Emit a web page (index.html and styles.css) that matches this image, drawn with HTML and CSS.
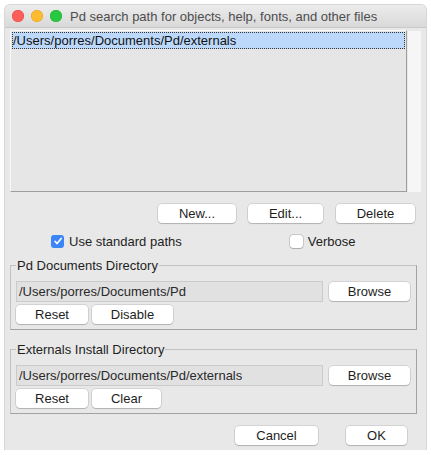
FILE: index.html
```html
<!DOCTYPE html>
<html>
<head>
<meta charset="utf-8">
<link rel="stylesheet" href="styles.css">
</head>
<body>
<div class="window">
  <div class="titlebar">
    <span class="light red"></span>
    <span class="light yellow"></span>
    <span class="light green"></span>
    <span class="title">Pd search path for objects, help, fonts, and other files</span>
  </div>
  <div class="content">
    <div class="listarea">
      <div class="list">
        <div class="item selected">/Users/porres/Documents/Pd/externals</div>
      </div>
      <div class="track"></div>
    </div>
    <div class="row actions">
      <button class="btn w-new">New...</button>
      <button class="btn w-edit">Edit...</button>
      <button class="btn w-delete">Delete</button>
    </div>
    <div class="row checks">
      <label class="check std"><span class="box on"><svg viewBox="0 0 12 12" width="12" height="12"><path d="M3 6.3 L5.1 8.6 L9.2 3.4" fill="none" stroke="#fff" stroke-width="1.6" stroke-linecap="round" stroke-linejoin="round"/></svg></span>Use standard paths</label>
      <label class="check verbose"><span class="box"></span>Verbose</label>
    </div>
    <fieldset class="group">
      <legend>Pd Documents Directory</legend>
      <div class="grow">
        <div class="entry">/Users/porres/Documents/Pd</div>
        <button class="btn w-browse">Browse</button>
      </div>
      <div class="grow">
        <button class="btn w-reset">Reset</button>
        <button class="btn w-disable">Disable</button>
      </div>
    </fieldset>
    <fieldset class="group second">
      <legend>Externals Install Directory</legend>
      <div class="grow">
        <div class="entry">/Users/porres/Documents/Pd/externals</div>
        <button class="btn w-browse">Browse</button>
      </div>
      <div class="grow">
        <button class="btn w-reset">Reset</button>
        <button class="btn w-clear">Clear</button>
      </div>
    </fieldset>
    <div class="row footer">
      <button class="btn w-cancel">Cancel</button>
      <button class="btn w-ok">OK</button>
    </div>
  </div>
</div>
</body>
</html>
```

FILE: styles.css
```css
html, body {
  margin: 0;
  padding: 0;
  background: #ffffff;
}
body {
  padding: 5px 0 0 5px;
  font-family: "Liberation Sans", Arial, sans-serif;
  font-size: 13px;
  color: #1e1e1e;
}
.window {
  width: 421px;
  height: 445px;
  background: #e8e8e8;
  border-radius: 5px 5px 0 0;
  box-shadow: 0 0 0 1px #d6d6d6;
  overflow: hidden;
}
.titlebar {
  height: 23px;
  display: flex;
  align-items: center;
  padding-left: 7px;
  background: linear-gradient(#ececec, #d9d9d9);
  border-bottom: 1px solid #c9c9c9;
  box-sizing: border-box;
}
.light {
  width: 12px;
  height: 12px;
  border-radius: 50%;
  margin-right: 7px;
  flex: none;
}
.red { background: #fc5f57; box-shadow: inset 0 0 0 0.5px #df4744; }
.yellow { background: #fdbc2e; box-shadow: inset 0 0 0 0.5px #de9f34; }
.green { background: #28c840; box-shadow: inset 0 0 0 0.5px #27aa35; }
.title {
  margin-left: 1px;
  color: #4d4d4d;
  font-size: 13px;
  white-space: nowrap;
}
.content {
  padding: 2px 11px 0 5px;
}
.listarea {
  display: flex;
  height: 162px;
}
.list {
  flex: none;
  width: 397px;
  box-sizing: border-box;
  background: #e6e6e6;
  border-left: 1px solid #f7f7f7;
  border-top: 1px solid #f7f7f7;
  border-right: 1px solid #9d9d9d;
  border-bottom: 1px solid #9d9d9d;
  padding: 0 1px;
}
.item {
  height: 17px;
  line-height: 16px;
  font-size: 13px;
  padding-left: 0;
  color: #111;
  box-sizing: border-box;
}
.selected {
  background: #bcd9fb;
  border: 1px dotted #333;
  margin-top: 1px;
}
.track {
  flex: none;
  width: 13px;
  margin-left: 1px;
  margin-top: 1px;
  background: #f6f6f6;
}
.row {
  display: flex;
  align-items: center;
}
.btn {
  font-family: "Liberation Sans", Arial, sans-serif;
  font-size: 13px;
  color: #1e1e1e;
  background: #ffffff;
  border: none;
  border-radius: 4px;
  height: 19px;
  padding: 0;
  box-shadow: 0 0 0 0.5px rgba(0,0,0,0.18), 0 1px 1px rgba(0,0,0,0.16);
  line-height: 19px;
  text-align: center;
}
.actions {
  justify-content: flex-end;
  margin-top: 12px;
  gap: 12px;
}
.w-new { width: 78px; }
.w-edit { width: 75px; }
.w-delete { width: 79px; margin-left: 1px; }
.checks {
  margin-top: 11px;
  height: 14px;
}
.check {
  display: flex;
  align-items: center;
  white-space: nowrap;
}
.std { margin-left: 41px; }
.verbose { margin-left: 108px; }
.box {
  width: 13px;
  height: 13px;
  box-sizing: border-box;
  border-radius: 3px;
  background: #fff;
  box-shadow: 0 0 0 0.5px rgba(0,0,0,0.25), 0 0.5px 1px rgba(0,0,0,0.15);
  margin-right: 5px;
  display: flex;
  align-items: center;
  justify-content: center;
}
.box.on {
  background: #3b85f7;
  box-shadow: none;
}
.group {
  margin: 10px 0 0 0;
  padding: 8px 6px 5px 5px;
  border: 1px solid;
  border-color: #c2c2c2 #a2a2a2 #a2a2a2 #c2c2c2;
  width: 406px;
  box-sizing: border-box;
}
.group legend {
  padding: 0 1px;
  margin-left: 0;
  line-height: 15px;
  color: #1e1e1e;
}
.second { margin-top: 12px; }
.grow {
  display: flex;
  align-items: center;
  gap: 4px;
}
.grow + .grow { margin-top: 3px; }
.entry {
  width: 307px;
  height: 21px;
  box-sizing: border-box;
  background: #e1e1e1;
  border: 1px solid #cbcbcb;
  line-height: 19px;
  padding-left: 2px;
  color: #2a2a2a;
  white-space: nowrap;
}
.w-browse { width: 81px; margin-left: 2px; }
.w-reset { width: 72px; }
.w-disable { width: 81px; }
.w-clear { width: 69px; }
.footer {
  justify-content: flex-end;
  margin-top: 12px;
  gap: 28px;
  padding-right: 8px;
}
.w-cancel { width: 83px; }
.w-ok { width: 61px; }
```
